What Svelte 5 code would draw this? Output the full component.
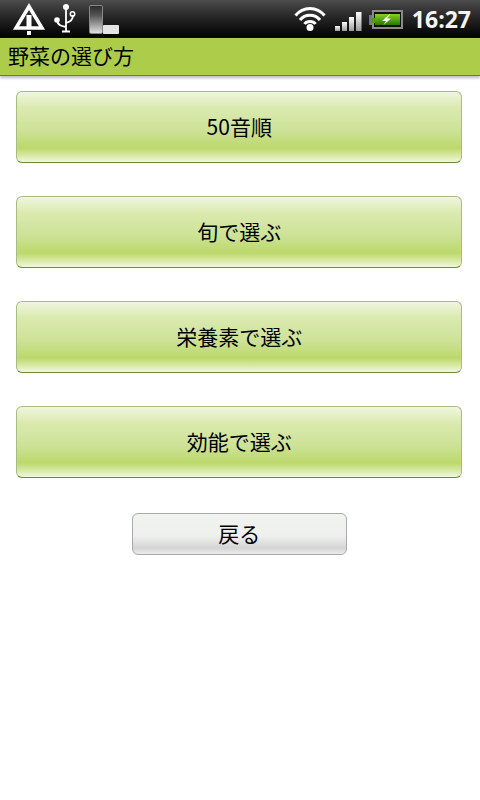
<div class="page">
  <div class="status">
    <div class="left">
      <svg class="warn" width="34" height="38" viewBox="12 0 34 38">
        <path d="M29 6.500 L16 28 H42 Z" fill="none" stroke="#fff" stroke-width="3.500"/>
        <rect x="26.500" y="15" width="5" height="13" fill="#fff"/>
        <rect x="27" y="31" width="4" height="4" fill="#fff"/>
      </svg>
      <svg class="usb" width="24" height="38" viewBox="53 0 24 38">
        <circle cx="66" cy="7" r="3" fill="#fff"/>
        <path d="M66 8V31M62 31.500H70M66 27C61 26 57 25 57.500 20M66 23C70 22 73 20 73 15" fill="none" stroke="#fff" stroke-width="1.800"/>
        <circle cx="57" cy="20" r="2.800" fill="#fff"/>
        <circle cx="72.500" cy="14" r="2.200" fill="none" stroke="#fff" stroke-width="1.500"/>
      </svg>
      <div class="storage">
        <span class="tall"></span>
        <span class="low"></span>
      </div>
    </div>
    <div class="right">
      <svg width="32" height="38" viewBox="295 0 32 38">
        <path d="M296.500 15.500C304 6 318 6 325.500 15.500M301 20C306 13.500 316 13.500 321 20M305.500 24C308 20.500 314 20.500 316.500 24" fill="none" stroke="#fff" stroke-width="3"/>
        <circle cx="311" cy="27.500" r="3.500" fill="#fff"/>
      </svg>
      <svg class="sig" width="27" height="38" viewBox="336 0 27 38">
        <defs><linearGradient id="sg" x1="0" y1="0" x2="0" y2="1"><stop offset="0" stop-color="#fff"/><stop offset="1" stop-color="#9a9a9a"/></linearGradient></defs>
        <rect x="336" y="26" width="5" height="5" fill="url(#sg)"/>
        <rect x="343" y="22" width="5" height="9" fill="url(#sg)"/>
        <rect x="350" y="17" width="5" height="14" fill="url(#sg)"/>
        <rect x="357" y="12" width="5.500" height="19" fill="url(#sg)"/>
      </svg>
      <svg class="bat" width="35" height="38" viewBox="370 0 35 38">
        <defs><linearGradient id="bg" x1="0" y1="0" x2="0" y2="1"><stop offset="0" stop-color="#86d31c"/><stop offset="1" stop-color="#2c7507"/></linearGradient></defs>
        <rect x="370" y="15" width="4" height="10" fill="#777"/>
        <rect x="374" y="11" width="29" height="17" fill="#111" stroke="#8a8a8a" stroke-width="2"/>
        <rect x="373" y="18" width="4" height="5" fill="#4ea010"/>
        <rect x="376" y="14" width="25" height="11" fill="url(#bg)"/>
        <path d="M391 14 L383 21 H387 L384.500 25 L392 18.500 H388 L391.500 14Z" fill="#fff"/>
      </svg>
      <span class="time">16:27</span>
    </div>
  </div>
  <div class="title">野菜の選び方</div>
  <div class="list">
    {#each ['50音順', '旬で選ぶ', '栄養素で選ぶ', '効能で選ぶ'] as label}
      <div class="btn green">{label}</div>
    {/each}
    <div class="btn back">戻る</div>
  </div>
</div>

<style>
  :global(body) {
    margin: 0;
    background: #fff;
  }
  .page {
    width: 480px;
    height: 800px;
    overflow: hidden;
    font-family: "Noto Sans CJK JP", "Liberation Sans", sans-serif;
    color: #000;
  }
  .status {
    height: 38px;
    box-sizing: border-box;
    display: flex;
    justify-content: space-between;
    align-items: stretch;
    background: linear-gradient(#4c4c4c, #2e2e2e 35%, #111 75%, #000);
  }
  .left {
    display: flex;
    align-items: center;
    padding-left: 12px;
  }
  .warn {
    margin-right: 7px;
  }
  .usb {
    margin-right: 12px;
  }
  .storage {
    display: flex;
    align-items: flex-end;
    height: 29px;
    margin-top: 5px;
    align-self: flex-start;
  }
  .tall {
    width: 14px;
    height: 29px;
    border-radius: 2px;
    background: linear-gradient(#2c2c2c, #555 35%, #e0e0e0);
    border: 1px solid #888;
    box-sizing: border-box;
  }
  .low {
    width: 16px;
    height: 9px;
    border-radius: 1px;
    background: #e4e4e4;
  }
  .right {
    display: flex;
    align-items: center;
    padding-right: 9px;
  }
  .sig {
    margin-left: 9px;
  }
  .bat {
    margin-left: 7px;
  }
  .time {
    margin-left: 8px;
    font-family: "Open Sans", "Liberation Sans", sans-serif;
    font-weight: 700;
    font-size: 23px;
    color: #f4f4f4;
  }
  .title {
    height: 38px;
    box-sizing: border-box;
    background: #adcd4a;
    border-bottom: 1px solid #6f7a4a;
    box-shadow: 0 2px 3px #bbb;
    padding-left: 8px;
    font-size: 21px;
    line-height: 35px;
  }
  .list {
    display: flex;
    flex-direction: column;
    align-items: center;
    padding-top: 15px;
    padding-right: 1.500px;
    gap: 33px;
  }
  .btn {
    display: flex;
    align-items: center;
    justify-content: center;
    box-sizing: border-box;
    font-size: 21px;
    padding-bottom: 2px;
  }
  .green {
    width: 446px;
    height: 72px;
    border-radius: 6px;
    border: 1px solid #a9bc84;
    border-bottom-color: #6d8c2e;
    background: linear-gradient(#eff6de, #dbeab0 22%, #cde297 55%, #bcd86b 80%, #d6e8a0 90%, #f0f7de);
  }
  .back {
    width: 215px;
    height: 42px;
    margin-top: 2px;
    border-radius: 6px;
    border: 1px solid #aaa;
    background: linear-gradient(#f1f3f1, #eef0ee 55%, #d4d4d4 85%, #ececec);
  }
</style>
